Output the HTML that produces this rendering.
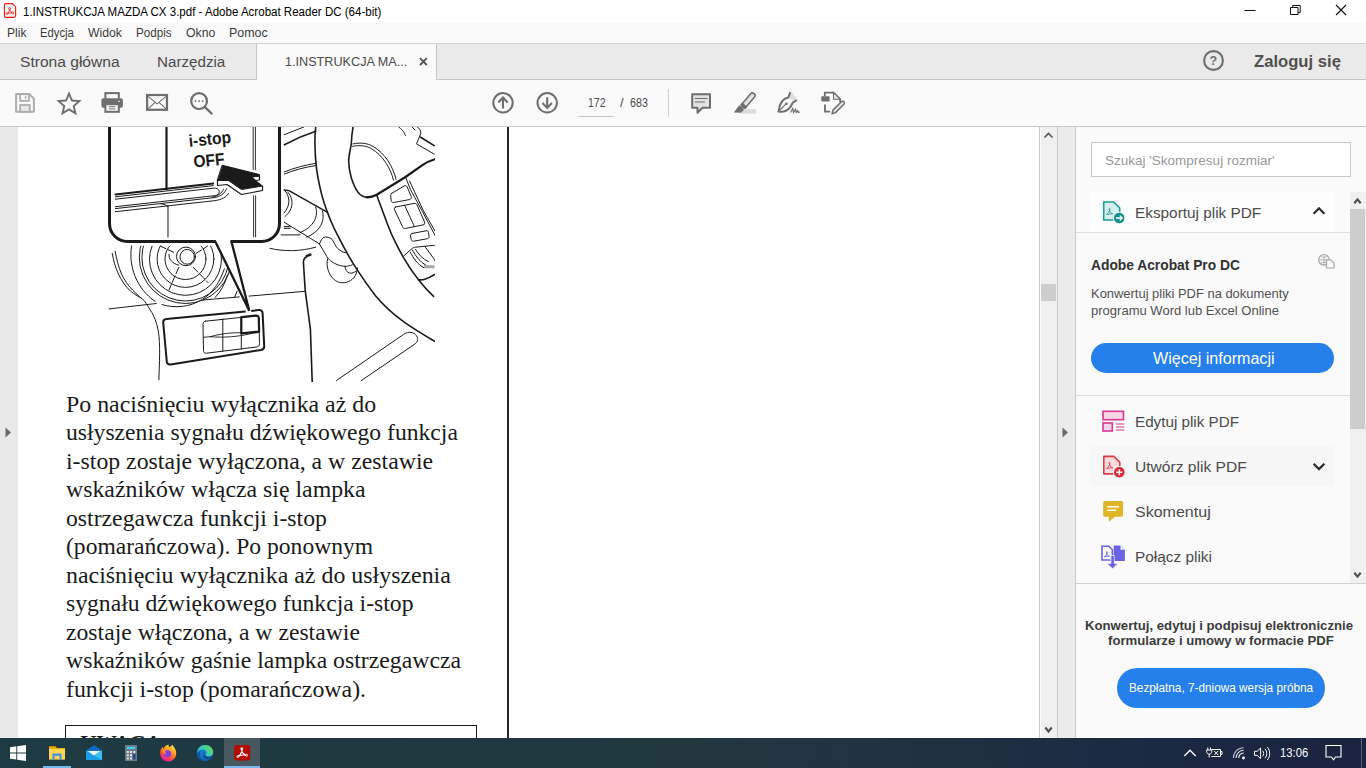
<!DOCTYPE html>
<html lang="pl">
<head>
<meta charset="utf-8">
<title>1.INSTRUKCJA MAZDA CX 3.pdf - Adobe Acrobat Reader DC (64-bit)</title>
<style>
*{margin:0;padding:0;box-sizing:border-box}
html,body{width:1366px;height:768px;overflow:hidden;background:#fff}
body{position:relative;font-family:"Liberation Sans",sans-serif;color:#000}
.abs{position:absolute}
.t{position:absolute;white-space:nowrap;line-height:1}
/* title bar */
#titlebar{left:0;top:0;width:1366px;height:23px;background:#fff}
#menubar{left:0;top:23px;width:1366px;height:21px;background:#fafafa;border-bottom:1px solid #d4d4d4}
#tabbar{left:0;top:44px;width:1366px;height:36px;background:#eaeaea;border-bottom:1px solid #c6c6c6}
#tab{left:256px;top:44px;width:181px;height:36px;background:#fafafa;border-left:1px solid #c6c6c6;border-right:1px solid #c6c6c6}
#toolbar{left:0;top:80px;width:1366px;height:47px;background:#fafafa;border-bottom:1px solid #c8c8c8}
#docarea{left:0;top:127px;width:1076px;height:611px;background:#fff;overflow:hidden}
#leftstrip{left:0;top:0;width:18px;height:612px;background:#e9e9e9}
#vscroll{left:1039px;top:0;width:19px;height:612px;background:linear-gradient(90deg,#fbfbfb 1px,#f0f0f0 1px);border-left:1px solid #cacaca;border-right:1px solid #cacaca}
#rightstrip{left:1058px;top:0;width:18px;height:612px;background:#ebebeb;border-right:1px solid #cacaca}
#panel{left:1076px;top:127px;width:290px;height:611px;background:#fafafa;overflow:hidden}
#taskbar{left:0;top:738px;width:1366px;height:30px;background:linear-gradient(90deg,#1e3a43 0%,#21383f 50%,#1f3142 70%,#1b2842 86%,#1a2340 100%)}
.doc{font-family:"Liberation Serif",serif;font-size:23.8px;color:#1a1a1a}
</style>
</head>
<body>
<!-- TITLE BAR -->
<div id="titlebar" class="abs">
</div>
<!-- MENU BAR -->
<div id="menubar" class="abs">
</div>
<!-- TAB BAR -->
<div id="tabbar" class="abs"></div>
<div id="tab" class="abs"></div>
<!-- TOOLBAR -->
<div id="toolbar" class="abs"></div>
<svg class="abs" style="left:0;top:0" width="1366" height="127" viewBox="0 0 1366 127" fill="none">
  <!-- app icon -->
  <path d="M6 3.6h6.3l3.3 3.3v8.8a1.6 1.6 0 0 1-1.6 1.6h-8a1.6 1.6 0 0 1-1.6-1.6v-10.5a1.6 1.6 0 0 1 1.6-1.6z" fill="#f4f4f4" stroke="#f01d12" stroke-width="1.15"/>
  <path d="M9.6 9.4c-.1 1.8-.9 3.2-2.1 3.9M9.7 9.4c.4 1.5 1.3 2.6 2.7 3.2M7.6 13.5c1.5-.7 3.2-.9 4.7-.7" stroke="#f01d12" stroke-width=".9"/>
  <circle cx="9.6" cy="8.6" r=".95" fill="#f4f4f4" stroke="#f01d12" stroke-width=".8"/>
  <circle cx="6.9" cy="13.6" r=".95" fill="#f4f4f4" stroke="#f01d12" stroke-width=".8"/>
  <circle cx="12.7" cy="12.9" r=".95" fill="#f4f4f4" stroke="#f01d12" stroke-width=".8"/>
  <!-- window controls -->
  <path d="M1244.5 10.5h11" stroke="#111" stroke-width="1"/>
  <path d="M1290.5 7.5h7.5v7h-7.5z M1292.7 7.5v-2h7.5v7h-2.2" stroke="#111" stroke-width="1"/>
  <path d="M1336 5l10 10M1346 5l-10 10" stroke="#111" stroke-width="1.1"/>
  <!-- tab close x -->
  <path d="M420 58.2l6.8 6.8M426.8 58.2l-6.8 6.8" stroke="#555" stroke-width="1.9"/>
  <!-- help -->
  <circle cx="1213.5" cy="60.5" r="9.4" stroke="#6e6e6e" stroke-width="2.1"/>
  <text x="1213.4" y="65" font-family="Liberation Sans" font-weight="bold" font-size="12.5" fill="#6e6e6e" text-anchor="middle">?</text>
  <!-- save (disabled) -->
  <path d="M16.1 94h13.2l4.6 4.7v13.1h-17.8z" stroke="#adadad" stroke-width="2" stroke-linejoin="round"/>
  <path d="M20.1 94v6.8h8.8v-6.8" stroke="#adadad" stroke-width="1.8"/>
  <rect x="24.9" y="95.7" width="1.3" height="3.3" fill="#adadad"/>
  <rect x="20.1" y="105" width="9.7" height="6.8" fill="#e6e6e6" stroke="#adadad" stroke-width="1.8"/>
  <!-- star -->
  <path d="M69 93.6l2.95 6.9 7.450.6-5.65 4.9 1.7 7.3-6.45-3.9-6.45 3.9 1.7-7.3-5.65-4.9 7.45-.6z" stroke="#6e6e6e" stroke-width="1.9" stroke-linejoin="miter"/>
  <!-- printer -->
  <rect x="105.4" y="93.1" width="13.4" height="7" stroke="#6e6e6e" stroke-width="2" fill="#fafafa"/>
  <rect x="101.4" y="98.3" width="21.5" height="9.4" rx="2" fill="#6e6e6e"/>
  <rect x="105.4" y="104.2" width="13.4" height="7.6" fill="#fafafa" stroke="#6e6e6e" stroke-width="2"/>
  <path d="M108.8 106.7h6.6M108.8 108.9h6.6" stroke="#6e6e6e" stroke-width="1"/>
  <rect x="118" y="100.9" width="2" height="1" fill="#e0e0e0"/>
  <!-- mail -->
  <rect x="147.1" y="95" width="19.9" height="14.8" stroke="#6e6e6e" stroke-width="2.2"/>
  <path d="M147.5 95.8l9.6 8 9.6-8M147.5 109.3l7.7-7M166.7 109.3l-7.7-7" stroke="#6e6e6e" stroke-width="1.1"/>
  <!-- search -->
  <circle cx="199.1" cy="101.1" r="7.9" stroke="#6e6e6e" stroke-width="2.2"/>
  <path d="M205.2 107.3l6.4 6.2" stroke="#6e6e6e" stroke-width="2.4" stroke-linecap="round"/>
  <circle cx="195.6" cy="101.1" r="0.95" fill="#6e6e6e"/><circle cx="199.1" cy="101.1" r="0.95" fill="#6e6e6e"/><circle cx="202.6" cy="101.1" r="0.95" fill="#6e6e6e"/>
  <!-- up / down -->
  <circle cx="503" cy="102.8" r="9.7" stroke="#6e6e6e" stroke-width="2"/>
  <path d="M503 108.4v-10.6M498.3 102.5l4.7-4.9 4.7 4.9" stroke="#6e6e6e" stroke-width="2.1"/>
  <circle cx="547.2" cy="102.8" r="9.7" stroke="#6e6e6e" stroke-width="2"/>
  <path d="M547.2 97.2v10.6M542.5 103.1l4.7 4.9 4.7-4.9" stroke="#6e6e6e" stroke-width="2.1"/>
  <!-- page number underline + separator -->
  <path d="M579 116.5h34" stroke="#c4c4c4" stroke-width="1"/>
  <path d="M668.5 89v28" stroke="#d0d0d0" stroke-width="1"/>
  <!-- comment -->
  <path d="M692.2 94.2h17.8v13.6h-7.5l-5 5v-5h-5.3z" fill="#e2e2e2" stroke="#6e6e6e" stroke-width="2" stroke-linejoin="round"/>
  <path d="M694.8 98.5h12.9M694.8 102h10.2" stroke="#6e6e6e" stroke-width="1"/>
  <!-- highlighter -->
  <rect x="740" y="109.2" width="16.2" height="4.5" fill="#dcdcdc"/>
  <path d="M743.9 105.6l8.5-10" stroke="#6e6e6e" stroke-width="6.6" stroke-linecap="round"/>
  <path d="M743.9 105.6l8.5-10" stroke="#e2e2e2" stroke-width="3.6" stroke-linecap="round"/>
  <path d="M741.3 103.6l4.8 4.6" stroke="#6e6e6e" stroke-width="3.2"/>
  <path d="M739.2 105.3l4.8 4.6-3.3 2.8-6.9-.2z" fill="#6e6e6e"/>
  <!-- sign pen -->
  <path d="M787.5 95.5l4.5-3 5.5 7-4 3z" fill="#dedede"/>
  <path d="M790.3 92.2l-2 5.3c-5.5 1-8.8 5.5-9.8 14 5.5 1.3 11.5-1.5 14-8.5l4.3-2.8" stroke="#6e6e6e" stroke-width="2" stroke-linejoin="round"/>
  <path d="M779.5 110.5l6.3-6.3" stroke="#6e6e6e" stroke-width="1.1"/><circle cx="786.3" cy="103.7" r="1.3" fill="#6e6e6e"/>
  <path d="M790.5 112.5l2.3-4 .7 4 2-3.200.7 3.2 1.5-1.800.6 1.8 1.5-.5" stroke="#6e6e6e" stroke-width="1.2"/>
  <!-- edit doc -->
  <path d="M824.8 96.3v-3.7h8.7l6.6 6.6v2.8" stroke="#6e6e6e" stroke-width="1.8"/>
  <path d="M833.5 92.6v6.6h6.6z" fill="#e6e6e6" stroke="#6e6e6e" stroke-width="1.1"/>
  <rect x="821.3" y="96.3" width="8.3" height="5.3" rx=".8" fill="#6e6e6e"/>
  <path d="M825 104.4v7.3h5.2" stroke="#6e6e6e" stroke-width="1.8"/>
  <path d="M832 113.7l1-3.6 8.3-8.3c.8-.7 2-.7 2.6 0 .7.700.7 1.8 0 2.5l-8.4 8.3z" fill="#e6e6e6" stroke="#6e6e6e" stroke-width="1.5" stroke-linejoin="round"/>
</svg>
<!-- DOC AREA -->
<div id="docarea" class="abs">
  <div id="leftstrip" class="abs"></div>
  <div class="abs" style="left:507px;top:0;width:1.5px;height:612px;background:#222"></div>
  <div id="vscroll" class="abs"></div>
  <div id="rightstrip" class="abs"></div>
  <div class="abs" style="left:1041px;top:157px;width:15px;height:17px;background:#cdcdcd"></div>
  <svg class="abs" style="left:0;top:0" width="1076" height="612" viewBox="0 127 1076 612" fill="none">
    <path d="M5.5 427.500l5.5 5-5.5 5z" fill="#6a6a6a"/>
    <path d="M1062.500 427.500l5.5 5-5.5 5z" fill="#6a6a6a"/>
    <path d="M1044.5 137.500l4-4 4 4" stroke="#555" stroke-width="1.6"/>
    <path d="M1045.3 727.5l3.2 3.9 3.2-3.9" stroke="#505050" stroke-width="2.2"/>
  </svg>
  <div class="abs" style="left:65px;top:598px;width:412px;height:30px;border:1.4px solid #1a1a1a;border-bottom:none"></div>
  <!--ILLUS-->
  <svg class="abs" style="left:100px;top:0" width="334.8" height="254.5" viewBox="100 127 334.8 254.5" fill="none" stroke="#1a1a1a" stroke-linecap="round" stroke-linejoin="round">
    <!-- ===== background drawing ===== -->
    <g stroke-width="1">
      <!-- vent concentric arcs -->
      <clipPath id="ventclip"><rect x="100" y="245.8" width="200" height="80"/></clipPath>
      <g clip-path="url(#ventclip)">
      <circle cx="185.5" cy="259" r="20.5"/>
      <circle cx="185.5" cy="259" r="28.4"/>
      <circle cx="185.5" cy="259.3" r="36"/>
      <circle cx="185.5" cy="257.4" r="43.6"/>
      <circle cx="185.5" cy="257.3" r="46.2"/>
      </g>
      <path d="M131.6 246c-3.5 20 5 43 23.6 55.5"/>
      <path d="M161.9 304.6c13 4 28 2.5 40.5-5.2 10-6.5 17.5-17 22-30.7"/>
      <path d="M227.5 274.8c-2.5 9-6.5 16.5-12.3 22.6M237.2 291.2l-2.5 5.7"/>
      <!-- knob -->
      <ellipse cx="186" cy="256.4" rx="9.5" ry="9.3" fill="#fff"/>
      <ellipse cx="187.2" cy="256.8" rx="7.2" ry="7.4"/>
      <path d="M169 254.3c-.5 5 3.5 9.5 9.8 10.8"/>
      <!-- dashed radial lines -->
      <path d="M178.8 267.2l-9.7 22.5M193.1 267.2l14.9 15.3" stroke-dasharray="7 2.5"/>
      <path d="M173.7 252.3l-13.4-6.2M196.2 253.3l11.3-7.2" stroke-dasharray="6 2.5"/>
      <!-- left contour double line -->
      <path d="M112.2 253.3c1.2 7 3.2 14 6.1 20.5 3 6.5 7 12.5 12.3 17.4 3.5 3 7 4.8 10.3 6.7 2.5 1.5 4 3.2 5.1 5.6 3 4.5 5.5 8 7.2 11.5 3 6 4.8 13 5.7 20 .8 8.500.9 17 .6 25.5l-.6 19.3"/>
      <path d="M115.2 251.3c1.2 7.5 3.2 15 6.2 22.5 3 6.2 6.5 11.5 11.3 16.4 2.8 2.8 5.5 5.2 8.2 7.7"/>
      <!-- dash/horizon line -->
      <path d="M109.1 308.9l47.1-5.4M202.9 300l36.4-3.1M249.2 296.1l56-4.8"/>
      <!-- switch inner -->
      <path d="M205.5 321.2l50-5.3c2-.2 3.300.8 3.4 2.8l.6 25c0 2-1 3-3 3.3l-50 6.2c-2 .2-3-.8-3-2.8l-.5-26c0-2 .8-3 2.5-3.2z"/>
      <path d="M222.8 319v32.3M241.3 317v32"/>
      <path d="M203.4 337.3l7-.6M252 333.3l7-.8M210.4 336.7c13-4 28-4.8 41.6-3.4-13 3.4-28 4.6-41.6 3.4z" stroke-width=".9"/>
      <!-- right of bubble: top lines -->
      <path d="M284.4 134.6l19.5-7.6"/>
      <path d="M284.4 171.9c10-4 20-6.8 31.3-8.5M284.4 174c10-4 20-6.7 31.3-8.4"/>
      <!-- stalk -->
      <path d="M284.2 190l4.800.6 38.6 21.8" stroke-width="1.4"/>
      <path d="M284.2 222.2l35.2 21.7"/>
      <path d="M284.5 190.5c5.5 5 6.5 15 -.5 22.5"/>
      <path d="M287.5 192c6 5.5 7 17-2.5 24.5"/>
      <path d="M315.7 207.2c3 9-2 20-15.7 25.4"/>
      <path d="M322.4 210.9c3 10-2.5 21-15.7 26.2"/>
      <path d="M284.2 226.6h6M284.2 228.3h6M281.2 234.9h18.8"/>
      <path d="M270 248.4c7 1.7 15 2.3 22.5 2.2 8-.1 16-1.4 23.2-3.4"/>
      <path d="M319.4 243.9l2.2-4.5c1.3-2 3.3-2.6 5.3-2.3 2.300.3 4 1 5.2 2.3l3.8 6.7c2.2 3.5 5.5 6 9.7 6.7"/>
      <path d="M319.4 243.9l7.5 12.7c2 3 4.5 5.2 7.5 6.7 3.3 1.7 7 2.8 10.5 3 2.500.1 5-.5 7.4-1.5"/>
      <!-- paddle -->
      <path d="M327.6 258.8c-1 4-.6 8.200.8 12 2.2 6.5 7 11.5 13.5 12 6.500.3 12-3.5 14.2-9 .8-2 1.3-4 1.5-6"/>
      <path d="M344.9 266.3c.3 3.3 2 6 4.4 6.7 2.600.6 5.2-.3 6.8-2.2"/>
      <!-- wheel inner double arc -->
      <path d="M353 143.9c7-1.5 14-1 20 2.5 12 7 20 20 23.1 33.1"/>
      <path d="M352.5 146.3c7-1.3 13.5-.8 19 2.4 11 6.5 19 19 22 31.5"/>
      <!-- wheel top-right bits -->
      <path d="M398.7 127c3 2 5.5 5 6.8 8.5"/>
      <path d="M417.3 127c2.5 1.5 3.8 4 3.4 6.8l-4.2 10.1 17.7 10.2"/>
      <path d="M412 127l3 3"/>
      <!-- buttons on spoke -->
      <path d="M391.5 193.5l12.5-7.5c1.5-.8 2.5-.4 3.2 1l4 9.5c.5 1.5 0 2.5-1.5 3l-16 3c-1.500.2-2.3-.5-2.5-2l-.5-4.5c0-1.200.2-2 .8-2.5z"/>
      <path d="M395.6 207l18.5-3.6c1.5-.3 2.500.3 3 1.7l7.5 17c.5 1.5 0 2.5-1.5 2.8l-17.5 3.5c-1.500.3-2.5-.3-3-1.6l-8-17c-.6-1.5-.3-2.5 1-2.8z"/>
      <path d="M404.6 205.2l8 17.5c.8 1.5 1.5 2.5 1.5 4"/>
      <path d="M412 233.5l14-2.7c1.5-.3 2.300.3 2.5 1.6l.6 4c.2 1.3-.4 2-1.7 2.3l-13.7 2.5c-1.300.2-2-.3-2.4-1.5l-.8-3.7c-.3-1.300.2-2.2 1.5-2.5z"/>
      <path d="M403.4 256.3l8.3-7.6c1.2-1 2.5-1.4 4-1.500l17.5-1.800c1.3-.1 2 .5 2.5 1.700M410.2 252.1c3.5 6.5 7.5 12.5 13.6 15.6M412.3 250c3.5 6 7.5 12 13.5 15.1M415.4 249.2c3.3 5 7 10 13 12.3M424.8 246.4l9.7 13.2c.9 1.3 1.3 2.6 1.2 4v2"/>
      <path d="M405.5 177l5 12.6 12 22.1 12.5 23.7"/>
      <path d="M409.5 181l14 30 11.5 20"/>
      <!-- dead pedal -->
      <path d="M336.5 380.5l67.1-46.1c5-3.4 10.5-2.5 13 1.5 2 3.5 1 6-1.5 8l-53.7 36.6"/>
    </g>
    <rect x="423.8" y="265.2" width="10.7" height="3.1" fill="#a6a6a6" stroke="none"/>
    <g stroke-width="1.6">
      <!-- steering wheel outer rim -->
      <path d="M315.7 127c-1.5 14-.8 28 .9 42.3 1.8 12 4.2 23 7.6 33.9 3.7 11 8 22 13.5 32.2 6 12 12.5 24 20.2 35.5 5.5 8.5 11.5 17 17.6 24.8 8 9.5 16.5 17.5 26.4 24.6 10 7.5 21 14 33 21.1"/>
      <!-- inner rim upper -->
      <path d="M353 127c-1 6-1.5 11-1.7 17-.8 5.5-2.5 11-2.6 16.9 0 6 1 11.5 2.6 16.9 1.7 5.5 3.8 10.5 6.7 14.4 2.5 3 5.5 4.8 8.5 5.1"/>
      <!-- spoke left edge & inner rim lower -->
      <path d="M376.7 194.7l1.7 5.1 9.4 25.2c2.2 6 4.8 12 7.8 17.7 2.4 5 5 9.8 7.8 14.6 4.5 8 9.6 15.5 15.1 22.4 4.5 5.8 9.5 11.5 15.1 16.7"/>
      <!-- column edge -->
      <path d="M310.8 254.9c-5 1.2-7.5 3.8-7.4 7.4l1.8 28.1 5.2 38.7 1.8 52.8"/>
      <!-- line b right of bubble -->
      <path d="M284.4 144.8c10-5.5 20-10 31.3-13.6"/>
      <path d="M420.7 137.2l13.5 8.4"/>
      <path d="M418.5 279.7c2.2.3 4.3.1 6.3-.5 3.5-1 6.8-2.700 9.9-4.7"/>
      <path d="M306.4 255.7l4.2-1.7"/>
    </g>
    <path d="M366.5 197.3c3.5 0 7-.8 10.2-2.6l28.8-17.7 16.9-11.9c4-2.6 8-4.6 12.6-5.9" stroke-width="2.2"/>
    <!-- switch outer panel -->
    <path d="M166.3 319.1l92.6-9c2.2-.2 3.600.8 3.7 3l1.6 33c.1 2.2-1 3.4-3.1 3.8l-90.5 14.6c-2.200.3-3.5-.6-3.8-2.8l-3.6-39c-.2-2.200.9-3.4 3.1-3.6z" stroke-width="2"/>
    <!-- highlighted switch -->
    <path d="M241.3 317.2l14.5-1.5c2-.2 3 .8 3 2.6l.3 13.4-17.8 1.6z" stroke-width="2.2"/>
    <path d="M245.6 311.2l5.6-.55" stroke="#fff" stroke-width="3.4" stroke-linecap="butt"/>
    <!-- ===== callout bubble ===== -->
    <path d="M109.5 120v103.5c0 10 8 18 18 18h87.7l34 69.3-18-69.3h30.3c10 0 18-8 18-18v-103.5z" fill="#fff" stroke="none"/>
    <!-- inside the bubble -->
    <g stroke-width="1">
      <path d="M253.2 127v42.5M255.4 127v42.5M253.6 195.8v41M255.6 195.8v41" stroke-width=".9"/>
      <path d="M168 205.4v31.8"/>
      <path d="M161 203.8c3 .5 5.8 1 7 3"/>
      <!-- trim lines -->
      <path d="M115.4 194.5l97.9-11" stroke-width="1.8"/>
      <path d="M115.4 196.8l97.9-11.2M115.4 199.2l97.9-11c3.5-.4 5.8 1 6 3.200.2 2.2-1.5 3.8-5 4.3l-98.9 11"/>
      <path d="M115.4 208.6l98.9-11c6-.8 10.5-4 12.1-8.8"/>
      <path d="M115.4 211.7l99-11c7-1 12.5-3.5 14-7.3"/>
      <path d="M212 197.2c5.5-.8 9.5-3.5 11.5-8"/>
    </g>
    <path d="M166.5 127v62.3" stroke-width="2.2"/>
    <!-- arrow -->
    <path d="M217.5 180.5v5l9.5-1 14.5 10 21-4v-4.5" fill="#fff" stroke-width="1.2"/>
    <path d="M251 177l8.5-1v4l-4 .5z" fill="#fff" stroke-width="1.2"/>
    <path d="M222.5 165.3l37 9.2v1.5l-8.5 1 11.5 9-21 3.5-13-9h-11z" fill="#1a1a1a" stroke-width="1"/>
    <!-- bubble outline -->
    <path d="M109.5 120v103.5c0 10 8 18 18 18h88.4M230.4 241.5h31.1c10 0 18-8 18-18v-103.5" stroke-width="3" stroke-linecap="butt"/>
    <path d="M215.4 241.7l33.9 69.1-17.8-69.1" stroke-width="2.3" stroke-linejoin="miter" stroke-linecap="butt"/>
    <!-- label -->
    <g fill="#1a1a1a" stroke="none" font-family="Liberation Sans, sans-serif" font-weight="bold" font-size="17">
      <text transform="translate(189.2 146.8) rotate(-5.5) scale(.92 1)">i-stop</text>
      <text transform="translate(194 167.6) rotate(-5.5) scale(.92 1)">OFF</text>
    </g>
  </svg>
  <!--/ILLUS-->
  <div class="t" style="left:79px;top:606.3px;font-family:'Liberation Serif',serif;font-weight:bold;font-style:italic;font-size:22.5px;color:#1a1a1a">UWAGA</div>
  <div class="doc">
    <div class="t" style="left:65.6px;top:266px;transform-origin:0 0;transform:scaleX(1.0029)">Po naciśnięciu wyłącznika aż do</div>
    <div class="t" style="left:65.6px;top:294px;transform-origin:0 0;transform:scaleX(0.9934)">usłyszenia sygnału dźwiękowego funkcja</div>
    <div class="t" style="left:65.6px;top:323px;transform-origin:0 0;transform:scaleX(0.9992)">i-stop zostaje wyłączona, a w zestawie</div>
    <div class="t" style="left:65.6px;top:351px;transform-origin:0 0;transform:scaleX(1.0007)">wskaźników włącza się lampka</div>
    <div class="t" style="left:65.6px;top:380px;transform-origin:0 0;transform:scaleX(0.9969)">ostrzegawcza funkcji i-stop</div>
    <div class="t" style="left:65.6px;top:408px;transform-origin:0 0;transform:scaleX(0.9909)">(pomarańczowa). Po ponownym</div>
    <div class="t" style="left:65.6px;top:437px;transform-origin:0 0;transform:scaleX(1.0042)">naciśnięciu wyłącznika aż do usłyszenia</div>
    <div class="t" style="left:65.6px;top:465px;transform-origin:0 0;transform:scaleX(0.9940)">sygnału dźwiękowego funkcja i-stop</div>
    <div class="t" style="left:65.6px;top:494px;transform-origin:0 0;transform:scaleX(0.9952)">zostaje włączona, a w zestawie</div>
    <div class="t" style="left:65.6px;top:522px;transform-origin:0 0;transform:scaleX(0.9980)">wskaźników gaśnie lampka ostrzegawcza</div>
    <div class="t" style="left:65.6px;top:551px;transform-origin:0 0;transform:scaleX(1.0024)">funkcji i-stop (pomarańczowa).</div>
  </div>
</div>
<!-- RIGHT PANEL -->
<div id="panel" class="abs">
  <!-- coordinates here are relative to panel (page x-1076, y-127) -->
  <div class="abs" style="left:15px;top:15px;width:260px;height:35px;background:#fff;border:1px solid #c9c9c9"></div>
  <div class="abs" style="left:15px;top:65px;width:243px;height:40px;background:#fdfdfd"></div>
  <div class="abs" style="left:0;top:105px;width:274px;height:1px;background:#dedede"></div>
  <div class="abs" style="left:15px;top:216px;width:243px;height:30px;border-radius:15px;background:#2680eb"></div>
  <div class="abs" style="left:0;top:268px;width:274px;height:1px;background:#dedede"></div>
  <div class="abs" style="left:15px;top:319px;width:243px;height:40px;background:#f7f7f7"></div>
  <!-- panel scrollbar -->
  <div class="abs" style="left:274px;top:65px;width:16px;height:391px;background:#f0f0f0"></div>
  <div class="abs" style="left:274px;top:82px;width:15px;height:220px;background:#cdcdcd"></div>
  <div class="abs" style="left:0;top:456px;width:290px;height:1px;background:#d2d2d2"></div>
  <div class="abs" style="left:41px;top:541px;width:208px;height:40px;border-radius:20px;background:#2680eb"></div>
  <svg class="abs" style="left:0;top:0" width="290" height="612" viewBox="1076 127 290 612" fill="none">
    <!-- export icon -->
    <path d="M1103.7 202h10l6 6v12h-16z" fill="#d6eeee" stroke="#1a9c9a" stroke-width="1.6" stroke-linejoin="round"/>
    <path d="M1106.5 214.5c1.8-.8 3-2.8 3.4-5.500.1-.9-.9-.9-.8 0 .3 2.4 1.6 4 3.6 4.8-2.2 0-4.200.2-6.200.7z" stroke="#1a9c9a" stroke-width=".9"/>
    <circle cx="1119.2" cy="218" r="5.8" fill="#14918f" stroke="#fafafa" stroke-width="1"/>
    <path d="M1116 218h6M1119.8 215.6l2.4 2.4-2.4 2.4" stroke="#fff" stroke-width="1.3"/>
    <!-- chevron up -->
    <path d="M1313.6 213.7l5.4-5.4 5.4 5.4" stroke="#2c2c2c" stroke-width="2.3"/>
    <!-- globe/doc small icon -->
    <circle cx="1324" cy="259.8" r="5.3" stroke="#a6a6a6" stroke-width="1.2"/>
    <path d="M1318.7 259.8h10.6M1324 254.5v10.6M1320.5 256.5c2 1 5 1 7 0M1320.5 263c2-1 5-1 7 0" stroke="#a6a6a6" stroke-width=".8"/>
    <path d="M1326.5 260h4.5l3 3v5h-7.5z" fill="#fafafa" stroke="#a6a6a6" stroke-width="1.2"/>
    <!-- edit icon -->
    <rect x="1103" y="411.3" width="20.5" height="8.4" fill="#f6d6e8" stroke="#d8368f" stroke-width="1.6"/>
    <rect x="1103" y="423" width="9.3" height="8" fill="#f6d6e8" stroke="#d8368f" stroke-width="1.6"/>
    <path d="M1115.8 424h8.5M1115.8 427h8.5M1115.8 430h8.5" stroke="#d8368f" stroke-width="1"/>
    <!-- create icon -->
    <path d="M1103.8 456.4h10l6 6v11.5h-16z" fill="#f9dcde" stroke="#de3a48" stroke-width="1.6" stroke-linejoin="round"/>
    <path d="M1106.5 468.5c1.8-.8 3-2.8 3.4-5.500.1-.9-.9-.9-.8 0 .3 2.4 1.6 4 3.6 4.8-2.2 0-4.200.2-6.200.7z" stroke="#de3a48" stroke-width=".9"/>
    <circle cx="1119.3" cy="472.2" r="5.8" fill="#db2a3a" stroke="#f6f6f6" stroke-width="1"/>
    <path d="M1116.3 472.2h6M1119.3 469.2v6" stroke="#fff" stroke-width="1.5"/>
    <!-- comment icon -->
    <path d="M1104.7 501.1h16.8a1.5 1.5 0 0 1 1.5 1.5v12.7a1.5 1.5 0 0 1-1.5 1.5h-6.6l-6 5v-5h-4.2a1.5 1.5 0 0 1-1.5-1.5v-12.7a1.5 1.5 0 0 1 1.5-1.5z" fill="#dfb726"/>
    <path d="M1107.2 506.8h11.7M1107.2 510.3h9" stroke="#fff" stroke-width="1.5"/>
    <!-- combine icon -->
    <path d="M1113.7 545.4h7l4.2 4.2v11.4h-11.2z" fill="#6a63e8"/>
    <path d="M1120.5 545.4v4.4h4.4z" fill="#fafafa"/>
    <path d="M1102 546.2h6.8l3.6 3.6v10.2h-10.4z" fill="#fafafa" stroke="#6a63e8" stroke-width="1.6"/>
    <path d="M1104.3 556.8c1.5-.6 2.5-2.3 2.9-4.600.1-.8-.8-.8-.7 0 .3 2 1.4 3.4 3 4-1.8 0-3.500.2-5.200.6z" stroke="#6a63e8" stroke-width=".9"/>
    <path d="M1110.9 555.5h3.4v7.9h3.7l-5.4 5.3-5.8-5.3h4.1z" fill="#6a63e8" stroke="#fafafa" stroke-width=".7"/>
    <!-- chevron down -->
    <path d="M1313.6 463.7l5.4 5.4 5.4-5.4" stroke="#2c2c2c" stroke-width="2.3"/>
    <!-- scroll arrows -->
    <path d="M1354.3 203.3l3.2-3.9 3.2 3.9" stroke="#505050" stroke-width="2.2"/>
    <path d="M1354.3 572.7l3.2 3.9 3.2-3.9" stroke="#505050" stroke-width="2.2"/>
  </svg>
</div>
<!-- TASKBAR -->
<div id="taskbar" class="abs">
  <div class="abs" style="left:224px;top:0;width:36px;height:30px;background:#47585f"></div>
  <div class="abs" style="left:43px;top:28px;width:28px;height:2px;background:#76b9ed"></div>
  <div class="abs" style="left:224px;top:28px;width:36px;height:2px;background:#76b9ed"></div>
  <svg class="abs" style="left:0;top:0" width="1366" height="30" viewBox="0 738 1366 30" fill="none">
    <!-- windows logo -->
    <path d="M10 747.2l6.3-.9v6.2h-6.3zM17.2 746.2l8.8-1.3v7.6h-8.8zM10 753.4h6.3v6.2l-6.3-.9zM17.2 753.4h8.8v7.6l-8.8-1.3z" fill="#fff"/>
    <!-- folder -->
    <path d="M49 746.2h6.5l1.5 1.7h8v3h-16z" fill="#e8a400"/>
    <rect x="49" y="748.8" width="16" height="10.8" fill="#ffd54f"/>
    <path d="M52.5 753.5h9v6.3h-2v-4h-5v4h-2z" fill="#3d8fe8"/>
    <!-- mail -->
    <path d="M86 750.5l8-5.5 8 5.5z" fill="#0a66c2"/>
    <rect x="86" y="750.5" width="16" height="9.5" fill="#1b9de2"/>
    <path d="M87.5 751h13l-6.5 4.5z" fill="#f2f2f2"/>
    <path d="M94 755.5l8-5v9.5z" fill="#3cc0f0"/>
    <!-- calculator -->
    <rect x="125" y="745" width="12" height="16" fill="#6b7a85"/>
    <rect x="126.8" y="746.8" width="8.4" height="2.2" fill="#3fd0f4"/>
    <path d="M126.8 751h2v2h-2zM130 751h2v2h-2zM126.8 754.2h2v2h-2zM130 754.2h2v2h-2zM126.8 757.4h2v2h-2zM130 757.4h2v2h-2z" fill="#e6e6e6"/>
    <rect x="133.3" y="751" width="2" height="2" fill="#e6e6e6"/>
    <rect x="133.3" y="754.2" width="2" height="5.2" fill="#0b3f91"/>
    <!-- firefox -->
    <defs>
      <linearGradient id="ffg" x1="0.8" y1="0.05" x2="0.25" y2="1">
        <stop offset="0" stop-color="#ffe14a"/><stop offset=".3" stop-color="#ffa421"/><stop offset=".62" stop-color="#ff5b2d"/><stop offset=".85" stop-color="#f3248c"/><stop offset="1" stop-color="#c91aa0"/>
      </linearGradient>
      <linearGradient id="edg1" x1="0" y1="0.2" x2="1" y2="1">
        <stop offset="0" stop-color="#1f8fe0"/><stop offset="1" stop-color="#0c4f9e"/>
      </linearGradient>
      <linearGradient id="edg2" x1="0" y1="0.8" x2="1" y2="0.1">
        <stop offset="0" stop-color="#2fb8d8"/><stop offset=".55" stop-color="#3fd0a0"/><stop offset="1" stop-color="#6fdc4c"/>
      </linearGradient>
    </defs>
    <path d="M160.3 751.6c.4-2.2 1.3-3.8 2.6-4.9-.1.900.1 1.600.7 2 .9-2.3 3-4 5.3-4.2-.6.9-.4 1.900.5 2.6 1.2-.9 2.2-1.2 3.2-2.400.5 1.6 1.6 2.4 2.3 3.7 1 1.8 1.4 3.3 1.3 5.3-.2 4.6-3.7 7.8-8.2 7.8-4.8 0-8.4-3.9-7.7-9.9z" fill="url(#ffg)"/>
    <circle cx="167.7" cy="753.7" r="3.5" fill="#7a3fe6"/>
    <path d="M164.3 750.6c1.4-.8 3-.6 4.200.3-1.3 0-2 .8-1.8 1.900.3 1.4 2 2.2 3.8 1.5 1.2-.5 1.7-1.7 1.5-2.9 1.5 2.200.9 5-1.2 6.6-2.7 1.9-6.4 1-7.9-1.9-1-2-.5-4.3 1.4-5.5z" fill="#ff7a1f" opacity=".0"/>
    <path d="M162.6 749.3c1.8-.6 3.5-.2 4.700.8-1-.1-1.800.3-2 1.1-.2 1 .4 1.8 1.4 2.2-1.300.5-2.800.2-3.7-.8-.8-1-1-2.2-.4-3.3z" fill="#ff8a25"/>
    <!-- edge -->
    <circle cx="205.1" cy="753" r="8.1" fill="url(#edg1)"/>
    <path d="M197.1 752.2c.6-4.2 4-7.3 8-7.3 4.6 0 8.1 3.4 8.1 7.4 0 2.5-2 4.3-4.4 4.3-1.8 0-3.1-.8-3.1-2 0-.8.6-1.300.6-2.3 0-1.5-1.5-2.7-3.5-2.7-2.6 0-4.9 1.2-5.7 2.6z" fill="url(#edg2)"/>
    <path d="M200.1 752.4c-.9 3.9 1.5 7.6 5.5 8.5-3.600.9-7.6-1.8-8.5-6.100.2-2.5 2-3.9 4.6-4.4-.8.5-1.4 1.1-1.6 2z" fill="#0c59a4"/>
    <path d="M204.9 758.6c2.500.8 5.600.2 7.5-2.6-1.5 1-3.4 1.3-5.1 1-1.8-.4-3.1-1.6-3.1-3.3-1.3 1.8-1 3.900.7 4.9z" fill="#114a8c"/>
    <!-- acrobat -->
    <rect x="234.2" y="745" width="16" height="15.4" rx="2.3" fill="#b30b00"/>
    <path d="M237.8 756.5c2-1 4-4 4.4-7.400.1-1-1-1-.9 0 .3 2.7 2 5 4.8 6.2" stroke="#fff" stroke-width="1.1"/>
    <path d="M238.2 756.3c2.5-1.1 5.4-1.5 8-1.1" stroke="#fff" stroke-width="1.1"/>
    <circle cx="237.8" cy="756.6" r="1" stroke="#fff" stroke-width=".8"/><circle cx="246.6" cy="755.3" r="1" stroke="#fff" stroke-width=".8"/><circle cx="241.8" cy="748.7" r="1" stroke="#fff" stroke-width=".8"/>
    <!-- tray chevron -->
    <path d="M1184.3 756l5.7-5.8 5.7 5.8" stroke="#fff" stroke-width="1.3"/>
    <!-- power/battery -->
    <path d="M1207.8 747.5v2.5M1210.6 747.5v2.5" stroke="#fff" stroke-width="1"/>
    <path d="M1206.6 750h5.2v1.5c0 1.5-1.1 2.6-2.6 2.6s-2.6-1.1-2.6-2.6zM1209.2 754v3.5" stroke="#fff" stroke-width="1"/>
    <path d="M1211.5 749.5h9v7h-9M1220.5 751.5h1.5v3h-1.5" stroke="#fff" stroke-width="1"/>
    <path d="M1214.2 751l4 4M1218.2 751l-4 4" stroke="#fff" stroke-width="1"/>
    <!-- wifi -->
    <circle cx="1243.5" cy="758" r="1.4" fill="#fff"/>
    <path d="M1238.7 758a5 5 0 0 1 5-5" stroke="#fff" stroke-width="1.1"/>
    <path d="M1236 758a7.7 7.7 0 0 1 7.7-7.7" stroke="#fff" stroke-width="1.1" opacity=".85"/>
    <path d="M1233.4 758a10.3 10.3 0 0 1 10.3-10.3" stroke="#fff" stroke-width="1.1" opacity=".7"/>
    <!-- volume -->
    <path d="M1254.5 751.3h2.6l3.5-3.3v10.6l-3.5-3.3h-2.6z" stroke="#fff" stroke-width="1"/>
    <path d="M1262.7 750.8c1.2 1.5 1.2 4 0 5.5M1265 748.8c2.3 2.8 2.3 6.7 0 9.5M1267.3 747c3.2 3.8 3.2 9.3 0 13.1" stroke="#fff" stroke-width="1"/>
    <!-- notification -->
    <path d="M1326 745.5h15v11.5h-5.5l-2 2.8-2-2.8h-5.5z" stroke="#fff" stroke-width="1.1"/>
    <path d="M1361.5 738v30" stroke="#5a6270" stroke-width="1"/>
  </svg>
</div>
<!-- UI TEXT -->
<!--UITEXT-->
<div class="t" style="left:22.92px;top:5.54px;font-size:12px;color:#000;transform-origin:0 0;transform:scaleX(0.9610);">1.INSTRUKCJA MAZDA CX 3.pdf - Adobe Acrobat Reader DC (64-bit)</div>
<div class="t" style="left:6.96px;top:27.04px;font-size:12px;color:#3a3a3a;transform-origin:0 0;transform:scaleX(1.0042);">Plik</div>
<div class="t" style="left:40.02px;top:27.04px;font-size:12px;color:#3a3a3a;transform-origin:0 0;transform:scaleX(0.9404);">Edycja</div>
<div class="t" style="left:88.45px;top:27.04px;font-size:12px;color:#3a3a3a;transform-origin:0 0;transform:scaleX(1.0146);">Widok</div>
<div class="t" style="left:135.85px;top:27.04px;font-size:12px;color:#3a3a3a;transform-origin:0 0;transform:scaleX(0.9694);">Podpis</div>
<div class="t" style="left:185.82px;top:27.04px;font-size:12px;color:#3a3a3a;transform-origin:0 0;transform:scaleX(1.0209);">Okno</div>
<div class="t" style="left:228.58px;top:27.04px;font-size:12px;color:#3a3a3a;transform-origin:0 0;transform:scaleX(1.0375);">Pomoc</div>
<div class="t" style="left:19.70px;top:53.83px;font-size:15.2px;color:#4b4b4b;transform-origin:0 0;transform:scaleX(1.0259);">Strona główna</div>
<div class="t" style="left:157.26px;top:53.83px;font-size:15.2px;color:#4b4b4b;transform-origin:0 0;transform:scaleX(0.9985);">Narzędzia</div>
<div class="t" style="left:285.34px;top:56.36px;font-size:12.8px;color:#4b4b4b;transform-origin:0 0;transform:scaleX(0.9875);">1.INSTRUKCJA MA...</div>
<div class="t" style="left:1253.72px;top:53.29px;font-size:16.2px;font-weight:bold;color:#505050;transform-origin:0 0;transform:scaleX(1.0276);">Zaloguj się</div>
<div class="t" style="left:587.60px;top:97.16px;font-size:12.8px;color:#4b4b4b;transform-origin:0 0;transform:scaleX(0.8208);">172</div>
<div class="t" style="left:619.60px;top:97.16px;font-size:12.8px;color:#4b4b4b;transform-origin:0 0;transform:scaleX(1.0117);">/</div>
<div class="t" style="left:629.86px;top:97.16px;font-size:12.8px;color:#4b4b4b;transform-origin:0 0;transform:scaleX(0.8383);">683</div>
<div class="t" style="left:1104.59px;top:153.86px;font-size:13.4px;color:#999;transform-origin:0 0;transform:scaleX(1.0082);">Szukaj 'Skompresuj rozmiar'</div>
<div class="t" style="left:1135.14px;top:204.85px;font-size:15.3px;color:#4b4b4b;transform-origin:0 0;transform:scaleX(1.0026);">Eksportuj plik PDF</div>
<div class="t" style="left:1090.97px;top:257.75px;font-size:14px;font-weight:bold;color:#323232;transform-origin:0 0;transform:scaleX(0.9851);">Adobe Acrobat Pro DC</div>
<div class="t" style="left:1090.64px;top:287.00px;font-size:13px;color:#505050;transform-origin:0 0;transform:scaleX(0.9949);">Konwertuj pliki PDF na dokumenty</div>
<div class="t" style="left:1090.87px;top:303.70px;font-size:13px;color:#505050;transform-origin:0 0;transform:scaleX(1.0015);">programu Word lub Excel Online</div>
<div class="t" style="left:1152.54px;top:351.46px;font-size:16px;color:#fff;transform-origin:0 0;transform:scaleX(1.0052);">Więcej informacji</div>
<div class="t" style="left:1135.25px;top:413.85px;font-size:15.3px;color:#4b4b4b;transform-origin:0 0;transform:scaleX(0.9949);">Edytuj plik PDF</div>
<div class="t" style="left:1134.50px;top:458.95px;font-size:15.3px;color:#4b4b4b;transform-origin:0 0;transform:scaleX(1.0187);">Utwórz plik PDF</div>
<div class="t" style="left:1134.68px;top:503.55px;font-size:15.3px;color:#4b4b4b;transform-origin:0 0;transform:scaleX(1.0473);">Skomentuj</div>
<div class="t" style="left:1134.54px;top:549.25px;font-size:15.3px;color:#4b4b4b;transform-origin:0 0;transform:scaleX(1.0060);">Połącz pliki</div>
<div class="t" style="left:1085.03px;top:618.80px;font-size:13px;font-weight:bold;color:#3c3c3c;transform-origin:0 0;transform:scaleX(1.0139);">Konwertuj, edytuj i podpisuj elektronicznie</div>
<div class="t" style="left:1108.08px;top:633.90px;font-size:13px;font-weight:bold;color:#3c3c3c;transform-origin:0 0;transform:scaleX(1.0115);">formularze i umowy w formacie PDF</div>
<div class="t" style="left:1128.63px;top:681.96px;font-size:12.8px;color:#fff;transform-origin:0 0;transform:scaleX(0.9210);">Bezpłatna, 7-dniowa wersja próbna</div>
<div class="t" style="left:1279.55px;top:746.74px;font-size:12px;color:#fff;transform-origin:0 0;transform:scaleX(0.9372);">13:06</div>
<!--/UITEXT-->
</body>
</html>
